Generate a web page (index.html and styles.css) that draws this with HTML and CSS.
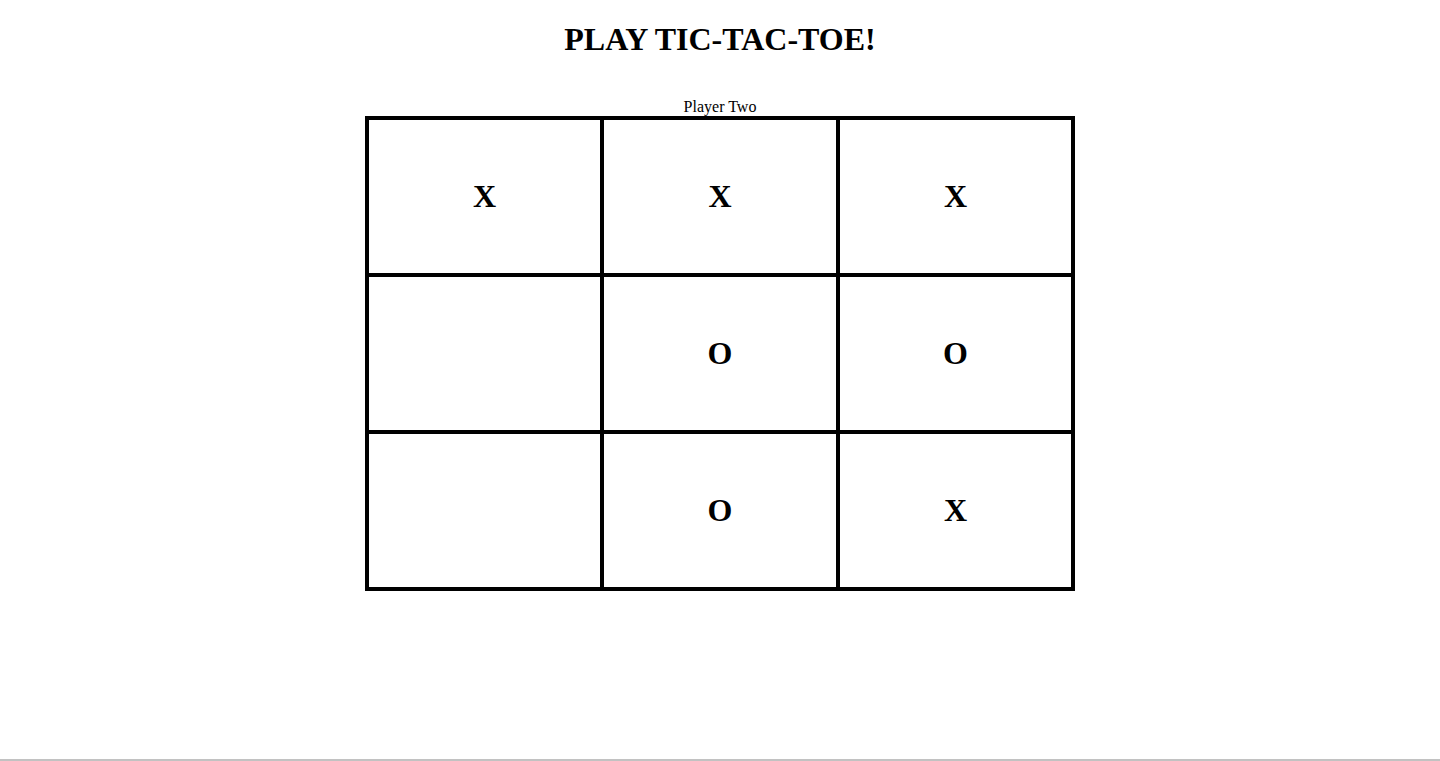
FILE: index.html
```html
<!DOCTYPE html>
<html>
<head>
<meta charset="utf-8">
<title>Tic-Tac-Toe</title>
<link rel="stylesheet" href="styles.css">
</head>
<body>
<div class="page">
  <h1 class="title">PLAY TIC-TAC-TOE!</h1>
  <div class="turn">Player Two</div>
  <div class="board">
    <div class="cell">X</div>
    <div class="cell">X</div>
    <div class="cell">X</div>
    <div class="cell"></div>
    <div class="cell">O</div>
    <div class="cell">O</div>
    <div class="cell"></div>
    <div class="cell">O</div>
    <div class="cell">X</div>
  </div>
</div>
</body>
</html>
```

FILE: styles.css
```css
html, body {
  margin: 0;
  padding: 0;
  background: #fff;
}

body {
  font-family: "Liberation Serif", "Times New Roman", serif;
  color: #000;
}

.page {
  box-sizing: border-box;
  min-height: 761px;
  border-bottom: 2px solid #c2c2c2;
  padding-top: 21px;
  display: flex;
  flex-direction: column;
  align-items: center;
}

.title {
  margin: 0;
  font-size: 32px;
  font-weight: bold;
  line-height: 37px;
}

.turn {
  margin-top: 39px;
  font-size: 16px;
  line-height: 19px;
}

.board {
  display: grid;
  grid-template-columns: 231px 232px 231px;
  grid-template-rows: 153px 153px 153px;
  gap: 4px;
  padding: 4px;
  background: #000;
}

.cell {
  background: #fff;
  display: flex;
  align-items: center;
  justify-content: center;
  font-size: 32px;
  font-weight: bold;
}
```
